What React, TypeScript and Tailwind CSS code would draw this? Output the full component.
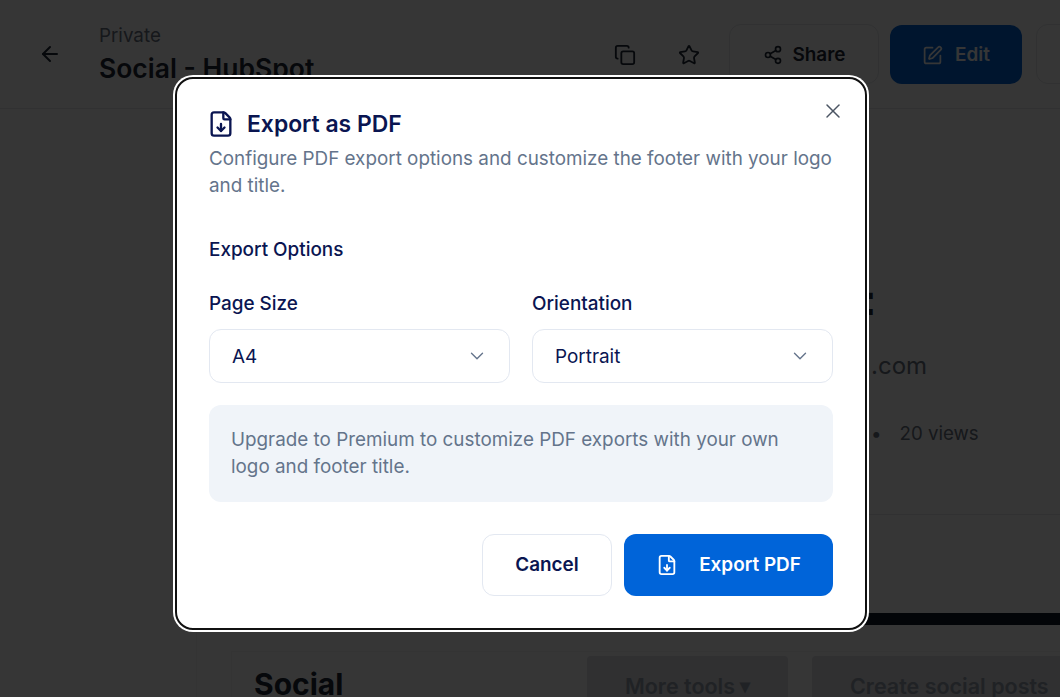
import { ArrowLeft, ChevronDown, Copy, FileDown, Share2, SquarePen, Star, X } from "lucide-react";

const BackgroundPage = () => {
  return (
    <div className="h-[697px] overflow-hidden bg-white text-[#1f2937]">
      {/* Cabecalho da pagina */}
      <div className="h-[109px] border-b border-gray-200 flex items-start">
        <div className="w-[99px] shrink-0 pl-[38px] pt-[42px]">
          <ArrowLeft size={24} strokeWidth={2} />
        </div>
        <div className="w-[515px] shrink-0 pt-[25px]">
          <div className="text-[18.8px] leading-[22px] text-gray-500">Private</div>
          <div className="text-[26.5px] leading-[43px] font-semibold whitespace-nowrap">Social - HubSpot</div>
        </div>
        <div className="flex items-center shrink-0 pt-[24px] h-[84px]">
          <Copy size={22} className="mt-[1px]" />
          <Star size={22} className="ml-[42px] mt-[1px]" />
          <div className="ml-[29px] h-[60px] w-[150px] pt-[2px] rounded-xl border border-gray-200 flex items-center justify-center gap-[10px] font-semibold text-[18.9px]">
            <Share2 size={20} />
            Share
          </div>
          <div className="ml-[11px] h-[59px] w-[132px] pt-[2px] rounded-xl bg-[#0064d9] flex items-center justify-center gap-[12px] font-semibold text-[18.9px] text-white">
            <SquarePen size={21} />
            Edit
          </div>
          <div className="ml-[14px] h-[60px] w-[40px] rounded-l-xl border border-gray-200"></div>
        </div>
      </div>

      {/* Conteudo atras do modal */}
      <div className="h-[588px] ml-[196px] border-l border-gray-100">
        <div className="mt-[166px] w-[680px] text-right font-['Liberation_Sans',sans-serif] text-[44px] leading-[50px] font-bold whitespace-nowrap">HubSpot:</div>
        <div className="mt-[25px] ml-[674px] text-[24px] leading-[32px] text-gray-500">.com</div>
        <div className="mt-[40px] ml-[674px] text-[18.7px] leading-[24px] text-gray-500 flex gap-[18px] whitespace-nowrap">
          <span>•</span>
          <span>20 views</span>
        </div>
        <div className="mt-[68px] ml-[34px] border-t border-gray-200"></div>
        <div className="mt-[98px] ml-[300px] h-[12px] bg-[#111827]"></div>
        <div className="mt-[26px] ml-[34px] border-l border-t border-gray-100 pl-[22px] pt-[4px] flex items-start whitespace-nowrap">
          <div className="text-[30px] leading-[56px] font-bold w-[333px] shrink-0">Social</div>
          <div className="w-[201px] h-[60px] shrink-0 bg-[#e0e2e6] rounded flex items-center justify-center gap-[5px] font-semibold text-[21.5px] text-gray-400">
            More tools
            <span className="text-[20px]">▾</span>
          </div>
          <div className="ml-[24px] w-[300px] h-[60px] shrink-0 bg-[#e0e2e6] rounded flex items-center pl-[38px] font-semibold text-[21.5px] text-gray-400">
            Create social posts
          </div>
        </div>
      </div>
    </div>
  );
};

const SelectBox = ({ label, value }: { label: string; value: string }) => {
  return (
    <div className="flex-1">
      <div className="text-[18.9px] leading-[28px] font-medium text-[#0a1551]">{label}</div>
      <div className="mt-[11px] h-[54px] rounded-xl border border-[#e3e8f1] pl-[22px] pr-[21px] flex items-center justify-between text-[18.9px] text-[#0a1551]">
        <span className="pt-[2px]">{value}</span>
        <ChevronDown size={22} strokeWidth={1.5} className="text-[#64748b]" />
      </div>
    </div>
  );
};

export default function App() {
  return (
    <div className="relative h-[697px] overflow-hidden font-['Inter',sans-serif]">
      <BackgroundPage />

      {/* Overlay escuro */}
      <div className="absolute inset-0 bg-black/[0.79]"></div>

      {/* Modal */}
      <div className="absolute left-[175px] top-[77px] w-[692px] h-[553px] rounded-[18px] border-2 border-[#111111] bg-white shadow-[0_0_0_2px_#ffffff] pl-[32px] pr-[32px] pt-[29px]">
        <X size={24} strokeWidth={1.5} className="absolute left-[644px] top-[20px] text-[#4b5563]" />
        <div className="flex items-center gap-[12px] h-[32px] -ml-[2px]">
          <FileDown size={28} className="text-[#0a1551]" />
          <div className="text-[22.9px] leading-[32px] font-semibold text-[#0a1551]">Export as PDF</div>
        </div>
        <div className="mt-[5px] -mr-[4px] text-[18.85px] leading-[27px] text-[#64748b]">
          Configure PDF export options and customize the footer with your logo and title.
        </div>
        <div className="mt-[37px] text-[18.9px] leading-[28px] font-medium text-[#0a1551]">Export Options</div>
        <div className="mt-[26px] flex gap-[22px]">
          <SelectBox label="Page Size" value="A4" />
          <SelectBox label="Orientation" value="Portrait" />
        </div>
        <div className="mt-[22px] h-[97px] rounded-xl bg-[#f0f4f9] px-[22px] py-[21px] text-[18.85px] leading-[27px] text-[#64748b]">
          Upgrade to Premium to customize PDF exports with your own logo and footer title.
        </div>
        <div className="mt-[32px] flex justify-end gap-[12px]">
          <div className="w-[130px] h-[62px] rounded-xl border border-[#e3e8f1] flex items-center justify-center font-semibold text-[18.9px] text-[#0a1551]">
            Cancel
          </div>
          <div className="w-[209px] h-[62px] rounded-xl bg-[#0064d9] flex items-center justify-center gap-[21px] font-semibold text-[18.9px] text-white">
            <FileDown size={22} />
            Export PDF
          </div>
        </div>
      </div>
    </div>
  );
}
